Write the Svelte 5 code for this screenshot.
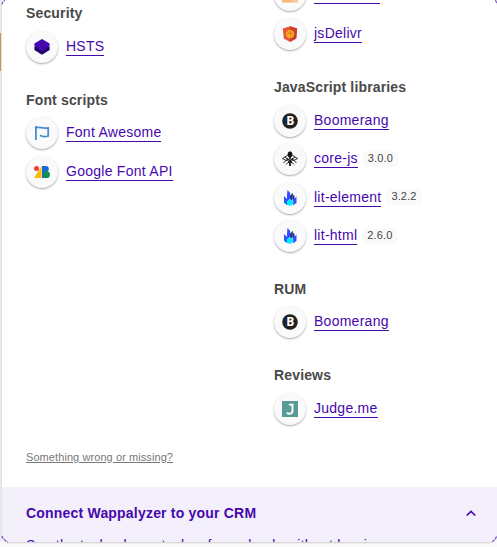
<script>
  const left = [
    { title: 'Security', items: [{ name: 'HSTS', icon: 'layers' }] },
    { title: 'Font scripts', items: [{ name: 'Font Awesome', icon: 'flag' }, { name: 'Google Font API', icon: 'fonts' }] }
  ];
  const right = [
    { title: 'JavaScript libraries', items: [
      { name: 'Boomerang', icon: 'boom' },
      { name: 'core-js', icon: 'core', version: '3.0.0' },
      { name: 'lit-element', icon: 'lit', version: '3.2.2' },
      { name: 'lit-html', icon: 'lit', version: '2.6.0' }
    ] },
    { title: 'RUM', items: [{ name: 'Boomerang', icon: 'boom' }] },
    { title: 'Reviews', items: [{ name: 'Judge.me', icon: 'judge' }] }
  ];
</script>

{#snippet glyph(name)}
  <svg width="16" height="16" viewBox="0 0 16 16">
    {#if name === 'layers'}
      <path d="M.4 7.500v3.500L8 15.800l7.600-4.800V7.500z" fill="#220070" />
      <path d="M8 0l7.600 4.600v2.500L8 12 .4 7.100V4.600z" fill="#4608ad" />
    {:else if name === 'flag'}
      <path d="M1.900 1v14M2 2.500c4.500-.8 5.500 1.300 12.200.3v8.200c-3.600 1.200-5.700.8-8.200-.8" fill="none" stroke="#4a8bd6" stroke-width="1.800" />
    {:else if name === 'fonts'}
      <path d="M0 14L7.500 2v12z" fill="#fbbc04" />
      <path d="M8 2h4v12H8z" fill="#1a67d8" />
      <circle cx="2.500" cy="4.500" r="2.500" fill="#ea4335" />
      <circle cx="11.800" cy="5" r="3" fill="#1967d2" />
      <circle cx="12.500" cy="10.700" r="3.400" fill="#0d904f" />
    {:else if name === 'jsd'}
      <path d="M8 .2L15.200 2.600l-1 10L8 15.900l-6.200-3.300-1-10z" fill="#e65442" />
      <path d="M8 .2L15.200 2.600l-1 10L8 15.900z" fill="#cb3f2e" />
      <circle cx="8" cy="8" r="4.200" fill="#f9ae20" />
      <path d="M8.500 4v8M8.500 7.500c-2-.3-3.200.4-4.200 1.800M8.500 6c1.500-.4 2 .3 1.500 1.700s1 1.800 2 1.300M5 5.500l3.500 2" fill="none" stroke="#d97822" stroke-width=".7" />
    {:else if name === 'boom'}
      <circle cx="8" cy="8" r="7.800" fill="#222" />
      <text x="8.200" y="12" text-anchor="middle">B</text>
    {:else if name === 'core'}
      <path d="M8 .5c2.300 0 2.800 2.500 2.300 4.500L8 7.500 5.700 5C5.200 3 5.700.5 8 .5z" fill="#111" />
      <path d="M5.500 4.500L.5 7.500l3.500 2L8 7.500l4 2 3.500-2-5-3M1.500 12l3.500-3.500L8 12l3-3.500 3.500 3.500M4 13.500l3-3 1 4.500 1-4.500 3 3M3 6l3.500 3M13 6L9.500 9M8 7v8M5 7l5 5M11 7l-5 5" fill="none" stroke="#222" stroke-width="1" />
    {:else if name === 'lit'}
      <path d="M5.500 0l2.700 3v5.500L5 11.500V5z" fill="#324fff" />
      <path d="M2 6l3 3v6L2 12.200z" fill="#324fff" />
      <path d="M10.800 2.800V9L8 12V5.800z" fill="#283198" />
      <path d="M10.800 4.500L12.500 6v4l-1.700 2z" fill="#283198" />
      <path d="M14.500 6.500v6.300l-3.300 2.700V10z" fill="#324fff" />
      <path d="M8 8.800l3.200 3v2L8.200 16 5 14.800v-3z" fill="#00e8ff" />
      <path d="M2 10l3 2v3l-3-2.500z" fill="#0071ff" />
    {:else if name === 'judge'}
      <path d="M0 0h16v16H0z" fill="#599c97" />
      <path d="M6.800 3.600h3.700v6.200c0 3.200-3.600 3.700-5.600 1.900" fill="none" stroke="#fff" stroke-width="1.900" />
    {:else}
      <path d="M0 8h16v7.500H0z" fill="#f9b377" />
      <path d="M9.500 14h6.500" stroke="#fff1e4" stroke-width=".7" />
    {/if}
  </svg>
{/snippet}

{#snippet row(item)}
  <div class="row">
    <span class="avatar">{@render glyph(item.icon)}</span>
    <a href="#top">{item.name}</a>
    {#if item.version}<span class="chip">{item.version}</span>{/if}
  </div>
{/snippet}

{#snippet group(g)}
  <section>
    <h2>{g.title}</h2>
    {#each g.items as item}{@render row(item)}{/each}
  </section>
{/snippet}

<div class="page">
  <div class="rail"><i></i></div>
  <main>
    <div class="columns">
      <div class="col first">
        {#each left as g}{@render group(g)}{/each}
      </div>
      <div class="col second">
        <section>
          {@render row({ name: 'Cloudflare', icon: 'cloud' })}
          {@render row({ name: 'jsDelivr', icon: 'jsd' })}
        </section>
        {#each right as g}{@render group(g)}{/each}
      </div>
    </div>
    <div class="report"><a href="#top">Something wrong or missing?</a></div>
    <div class="crm">
      <div class="crm-title">
        <strong>Connect Wappalyzer to your CRM</strong>
        <svg width="12" height="8" viewBox="0 0 12 8"><path d="M1.700 6.500L6 2.400 10.300 6.500" fill="none" stroke="#4608ad" stroke-width="1.600" /></svg>
      </div>
      <p>See the technology stacks of your leads without leaving</p>
    </div>
  </main>
  <svg class="corners" width="497" height="547" fill="none" stroke="#7645c5" stroke-width="1.100">
    <path d="M2 4.500Q2.500 1.500 5 0M495.500 0l1.500 4M2 536q1 4 6 6M492 541.500q3-1 5-6" stroke-dasharray="3 1" />
  </svg>
</div>

<style>
  :global(body) { margin: 0; background: #fafafa; }
  .page { position: relative; width: 497px; height: 547px; overflow: hidden; display: flex; background: #fafafa; font-family: "Liberation Sans", Arial, sans-serif; }
  .rail { width: 2px; height: 542px; background: #eaeaea; padding-top: 33px; box-sizing: border-box; }
  .rail i { display: block; width: 1px; height: 38px; background: #c39650; }
  main { flex: 1; height: 542px; overflow: hidden; background: #fff; border-radius: 7px 5px 8px 8px; box-shadow: 0 1px 2px #ccc; }
  .columns { display: flex; height: 445px; padding-left: 24px; }
  .col { width: 248px; flex: none; }
  .second { width: 223px; margin-top: -25.300px; }
  .first { margin-top: 1.200px; }
  section { margin-bottom: 23px; }
  h2 { margin: 0; height: 25px; line-height: 24px; font-size: 14px; letter-spacing: .15px; color: #494949; }
  .row { height: 38.400px; display: flex; align-items: center; }
  .second section:first-child { margin-bottom: 23.700px; }
  .avatar { width: 32px; height: 32px; border-radius: 50%; background: #fafafa; box-shadow: 0 1px 2px #aaa; display: flex; align-items: center; justify-content: center; margin-top: 3px; flex: none; }
  .avatar text { font: bold 12px "Open Sans", sans-serif; fill: #fff; }
  .row a { margin: 3px 0 0 8px; color: #4608ad; font-size: 14px; letter-spacing: .26px; line-height: 17px; height: 18px; text-decoration: none; border-bottom: 1px solid #4608ad; box-sizing: border-box; }
  .chip { margin-left: 5px; padding: 0 5px; height: 16px; line-height: 15px; font-size: 11px; letter-spacing: .12px; border-radius: 3px; background: #fafafa; color: #444; margin-top: 2px; }
  .report { height: 42px; line-height: 25px; padding-left: 24px; font-size: 11px; letter-spacing: .08px; }
  .report a { color: #777; text-underline-offset: 1px; }
  .crm { height: 60px; padding-left: 24px; background: #f3effb; color: #4608ad; }
  .crm-title { height: 52px; display: flex; align-items: center; justify-content: space-between; padding-right: 20px; }
  strong { font-size: 14px; letter-spacing: .2px; }
  p { margin: -3px 0 0; line-height: 18px; font-size: 14px; letter-spacing: .24px; white-space: nowrap; }
  .corners { position: absolute; left: 0; top: 0; }
</style>
